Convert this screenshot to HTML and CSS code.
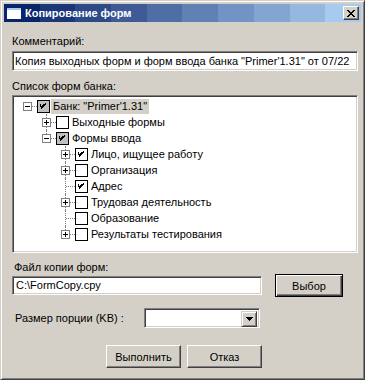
FILE: index.html
```html
<!DOCTYPE html>
<html>
<head>
    <meta charset="utf-8">
    <title>Копирование форм</title>
    <link rel="stylesheet" href="styles.css">
</head>
<body>

<div class="window">
    <!-- Title bar -->
    <div class="titlebar">
        <svg class="app-icon" width="16" height="14" viewBox="0 0 16 14">
            <rect x="1" y="2" width="14" height="11" fill="#ffffff"/>
            <rect x="1" y="2" width="14" height="2" fill="#a6caf0"/>
        </svg>
        <span class="title">Копирование форм</span>
        <button class="close-button">
            <svg width="8" height="7" viewBox="0 0 8 7" shape-rendering="crispEdges">
                <path d="M0 0h2v1h1v1h2v-1h1v-1h2v1h-1v1h-1v1h-1v1h1v1h1v1h1v1h-2v-1h-1v-1h-2v1h-1v1h-2v-1h1v-1h1v-1h1v-1h-1v-1h-1v-1h-1z" fill="#000"/>
            </svg>
        </button>
    </div>

    <div class="dialog">
        <!-- Comment -->
        <label class="caption caption-comment">Комментарий:</label>
        <div class="field comment-field">Копия выходных форм и форм ввода банка "Primer'1.31" от 07/22</div>

        <!-- Forms tree -->
        <label class="caption caption-list">Список форм банка:</label>
        <div class="field tree">
            <div class="tree-row">
                <span class="cell root"><i class="exp minus"></i></span>
                <span class="check partial"><svg viewBox="0 0 13 13"><path d="M2 4V7H3V8H4V9H5V8H6V7H7V6H8V5H9V2H8V3H7V4H6V5H5V6H4V5H3V4Z"/></svg></span>
                <span class="node-text selected">Банк: "Primer'1.31"</span>
            </div>
            <div class="tree-row">
                <span class="cell"></span>
                <span class="cell tee"><i class="exp plus"></i></span>
                <span class="check"></span>
                <span class="node-text">Выходные формы</span>
            </div>
            <div class="tree-row">
                <span class="cell"></span>
                <span class="cell end"><i class="exp minus"></i></span>
                <span class="check partial"><svg viewBox="0 0 13 13"><path d="M2 4V7H3V8H4V9H5V8H6V7H7V6H8V5H9V2H8V3H7V4H6V5H5V6H4V5H3V4Z"/></svg></span>
                <span class="node-text">Формы ввода</span>
            </div>
            <div class="tree-row">
                <span class="cell"></span>
                <span class="cell"></span>
                <span class="cell tee"><i class="exp plus"></i></span>
                <span class="check"><svg viewBox="0 0 13 13"><path d="M2 4V7H3V8H4V9H5V8H6V7H7V6H8V5H9V2H8V3H7V4H6V5H5V6H4V5H3V4Z"/></svg></span>
                <span class="node-text">Лицо, ищущее работу</span>
            </div>
            <div class="tree-row">
                <span class="cell"></span>
                <span class="cell"></span>
                <span class="cell tee"><i class="exp plus"></i></span>
                <span class="check"></span>
                <span class="node-text">Организация</span>
            </div>
            <div class="tree-row">
                <span class="cell"></span>
                <span class="cell"></span>
                <span class="cell tee"></span>
                <span class="check"><svg viewBox="0 0 13 13"><path d="M2 4V7H3V8H4V9H5V8H6V7H7V6H8V5H9V2H8V3H7V4H6V5H5V6H4V5H3V4Z"/></svg></span>
                <span class="node-text">Адрес</span>
            </div>
            <div class="tree-row">
                <span class="cell"></span>
                <span class="cell"></span>
                <span class="cell tee"><i class="exp plus"></i></span>
                <span class="check"></span>
                <span class="node-text">Трудовая деятельность</span>
            </div>
            <div class="tree-row">
                <span class="cell"></span>
                <span class="cell"></span>
                <span class="cell tee"></span>
                <span class="check"></span>
                <span class="node-text">Образование</span>
            </div>
            <div class="tree-row">
                <span class="cell"></span>
                <span class="cell"></span>
                <span class="cell end"><i class="exp plus"></i></span>
                <span class="check"></span>
                <span class="node-text">Результаты тестирования</span>
            </div>
        </div>

        <!-- Copy file -->
        <label class="caption caption-file">Файл копии форм:</label>
        <div class="file-row">
            <div class="field file-field">C:\FormCopy.cpy</div>
            <button class="win-button default-button select-button">Выбор</button>
        </div>

        <!-- Portion size -->
        <div class="portion-row">
            <label class="portion-label">Размер порции (KB) :</label>
            <div class="field combo">
                <span class="combo-button">
                    <svg width="7" height="4" viewBox="0 0 7 4" shape-rendering="crispEdges">
                        <path d="M0 0h7v1h-1v1h-1v1h-1v1h-1v-1h-1v-1h-1v-1h-1z" fill="#000"/>
                    </svg>
                </span>
            </div>
        </div>

        <!-- Actions -->
        <div class="actions">
            <button class="win-button">Выполнить</button>
            <button class="win-button">Отказ</button>
        </div>
    </div>
</div>

</body>
</html>
```

FILE: styles.css
```css
body {
    margin: 0;
    font-family: "Liberation Sans", Arial, sans-serif;
    font-size: 11px;
    color: #000;
    background: #d4d0c8;
}

.window {
    width: 365px;
    height: 380px;
    box-sizing: border-box;
    padding: 3px;
    background: #d4d0c8;
    border: 1px solid;
    border-color: #d4d0c8 #404040 #404040 #d4d0c8;
    box-shadow: inset 1px 1px #ffffff, inset -1px -1px #808080;
}

/* Title bar */
.titlebar {
    height: 18px;
    display: flex;
    align-items: center;
    padding: 0 2px 0 2px;
    background: linear-gradient(to right,
        #0a246a 0%, #0a246a 10%,
        #1b3679 10%, #1b3679 20%,
        #2d4988 20%, #2d4988 30%,
        #3e5b97 30%, #3e5b97 40%,
        #4f6ea6 40%, #4f6ea6 50%,
        #6180b4 50%, #6180b4 60%,
        #7293c3 60%, #7293c3 70%,
        #83a5d2 70%, #83a5d2 80%,
        #95b8e1 80%, #95b8e1 90%,
        #a6caf0 90%, #a6caf0 100%);
}

.app-icon {
    display: block;
    flex: none;
}

.title {
    flex: 1;
    margin-left: 3px;
    color: #ffffff;
    font-weight: bold;
    font-size: 11px;
}

.close-button {
    width: 16px;
    height: 14px;
    padding: 0;
    display: flex;
    align-items: center;
    justify-content: center;
    background: #d4d0c8;
    border: 1px solid;
    border-color: #ffffff #404040 #404040 #ffffff;
    box-shadow: inset -1px -1px #808080;
}

/* Dialog body */
.dialog {
    padding: 0 3px 0 8px;
}

.caption {
    display: block;
    height: 13px;
    line-height: 13px;
}

.caption-comment {
    margin-top: 13px;
}

.caption-list {
    margin-top: 9px;
}

.caption-file {
    margin-top: 8px;
    padding-left: 2px;
}

.field {
    box-sizing: border-box;
    background: #ffffff;
    border: 1px solid;
    border-color: #808080 #ffffff #ffffff #808080;
    box-shadow: inset 1px 1px #404040, inset -1px -1px #d4d0c8;
}

.comment-field {
    margin-top: 3px;
    height: 20px;
    line-height: 18px;
    padding: 0 2px;
    white-space: nowrap;
    overflow: hidden;
}

/* Tree view */
.tree {
    margin-top: 2px;
    height: 158px;
    padding: 2px 0 0 5px;
}

.tree-row {
    height: 16px;
    display: flex;
    align-items: center;
}

.cell {
    position: relative;
    flex: none;
    width: 19px;
    height: 16px;
}

.cell.tee::before,
.cell.end::before {
    content: "";
    position: absolute;
    left: 9px;
    top: 0;
    height: 16px;
    border-left: 1px dotted #808080;
}

.cell.end::before {
    height: 8px;
}

.cell.root::after,
.cell.tee::after,
.cell.end::after {
    content: "";
    position: absolute;
    left: 10px;
    top: 8px;
    width: 9px;
    border-top: 1px dotted #808080;
}

.exp {
    position: absolute;
    z-index: 1;
    left: 5px;
    top: 4px;
    width: 9px;
    height: 9px;
    box-sizing: border-box;
    background: #ffffff;
    border: 1px solid #808080;
}

.exp::before {
    content: "";
    position: absolute;
    left: 1px;
    top: 3px;
    width: 5px;
    height: 1px;
    background: #000;
}

.exp.plus::after {
    content: "";
    position: absolute;
    left: 3px;
    top: 1px;
    width: 1px;
    height: 5px;
    background: #000;
}

.check {
    flex: none;
    width: 13px;
    height: 13px;
    box-sizing: border-box;
    background: #ffffff;
    border: 1px solid #000000;
}

.check svg {
    display: block;
    width: 11px;
    height: 11px;
    shape-rendering: crispEdges;
}

.check.partial {
    background: #c0c0c0;
}

.node-text {
    margin-left: 1px;
    padding: 0 2px;
    line-height: 15px;
    white-space: nowrap;
}

.node-text.selected {
    background: #d4d0c8;
}

/* File row */
.file-row {
    display: flex;
    align-items: center;
    height: 23px;
}

.file-field {
    width: 250px;
    height: 19px;
    line-height: 17px;
    padding: 0 3px;
}

.win-button {
    box-sizing: border-box;
    width: 75px;
    height: 23px;
    padding: 0;
    font-family: "Liberation Sans", Arial, sans-serif;
    font-size: 11px;
    color: #000;
    background: #d4d0c8;
    border: 1px solid;
    border-color: #ffffff #404040 #404040 #ffffff;
    box-shadow: inset -1px -1px #808080;
}

.default-button {
    border: 1px solid #000000;
    box-shadow: inset 1px 1px #ffffff, inset -1px -1px #404040, inset -2px -2px #808080;
}

.select-button {
    width: 68px;
    margin-left: 13px;
}

/* Portion size */
.portion-row {
    margin-top: 11px;
    display: flex;
    align-items: center;
    height: 20px;
}

.portion-label {
    width: 129px;
    padding-left: 3px;
}

.combo {
    width: 116px;
    height: 20px;
    padding: 2px;
    display: flex;
    justify-content: flex-end;
}

.combo-button {
    box-sizing: border-box;
    width: 16px;
    height: 16px;
    display: flex;
    align-items: center;
    justify-content: center;
    background: #d4d0c8;
    border: 1px solid;
    border-color: #d4d0c8 #404040 #404040 #d4d0c8;
    box-shadow: inset 1px 1px #ffffff, inset -1px -1px #808080;
}

/* Bottom buttons */
.actions {
    margin-top: 17px;
    display: flex;
    gap: 6px;
    padding-left: 94px;
}
```
